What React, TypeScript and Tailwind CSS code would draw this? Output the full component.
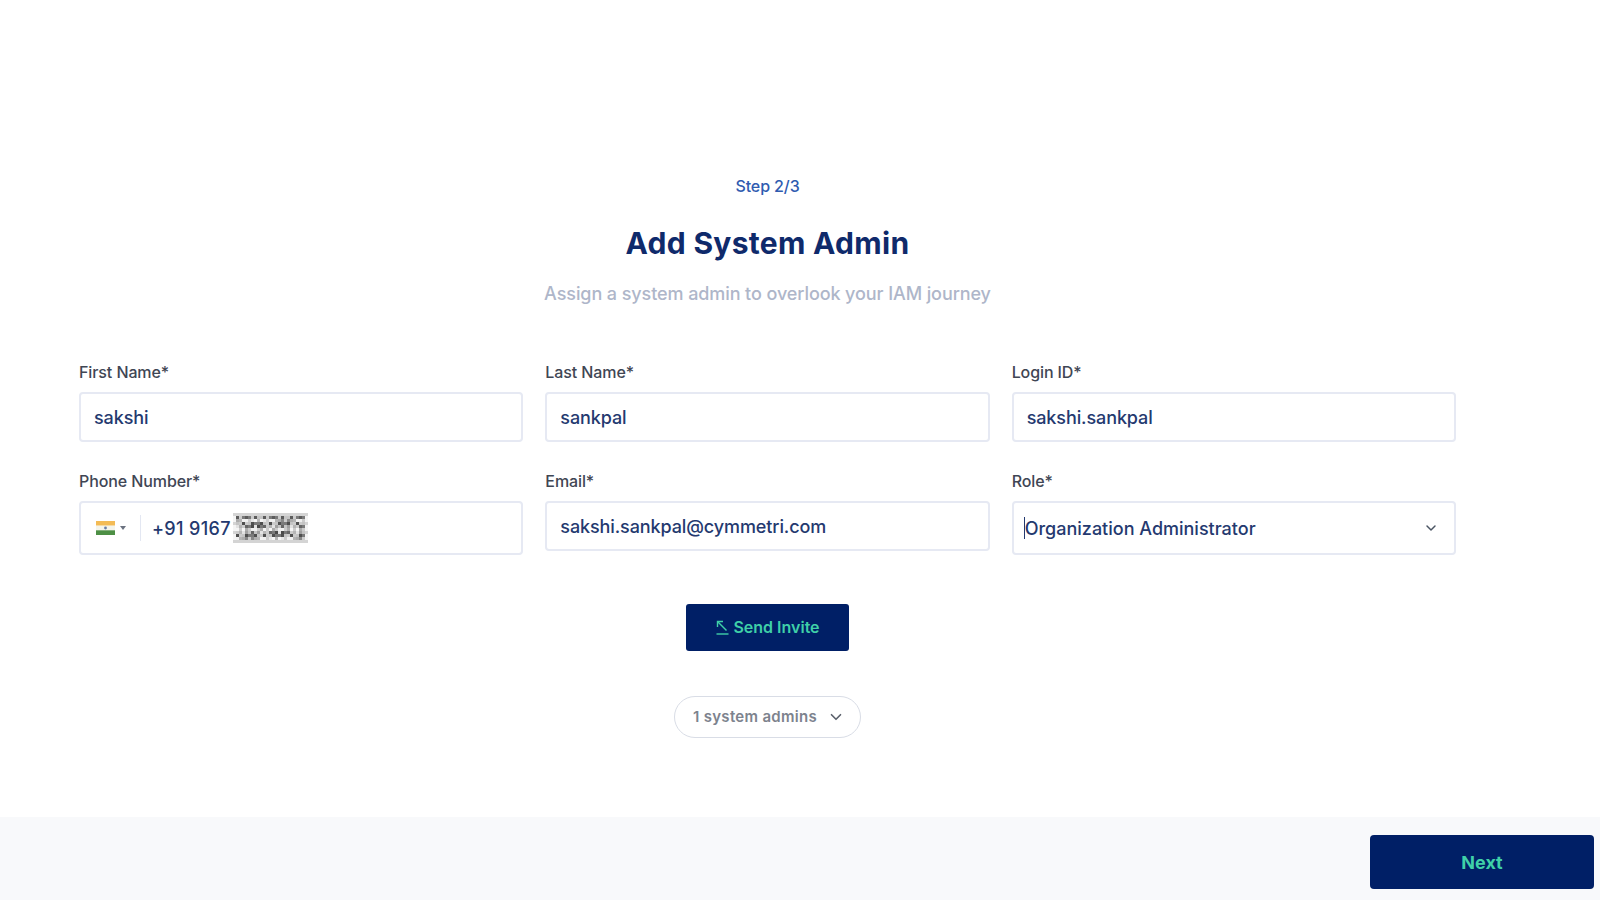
import { ChevronDown } from 'lucide-react';

const inter = 'font-["Inter","Noto_Sans",sans-serif]';

// mosaic cells for the masked part of the phone number
const shades = [
  '#d0d0d0', '#7a7a7a', '#efefef', '#4f4f4f', '#b5b5b5', '#f5f5f5', '#666666', '#c4c4c4', '#e6e6e6', '#5c5c5c',
  '#a0a0a0', '#f0f0f0', '#3f3f3f', '#cccccc', '#888888', '#e2e2e2', '#4a4a4a', '#acacac',
];

function Mosaic() {
  const cells = [];
  for (let y = 0; y < 10; y++) {
    for (let x = 0; x < 25; x++) {
      const edge = y === 0 || y === 9 || x === 0 || x === 24;
      const fill = edge ? (x * 3 + y * 5) % 3 === 0 ? '#d4d4d4' : '#f4f4f4' : shades[(x * x + y * 7 + x * y) % shades.length];
      cells.push(<rect key={`${x}-${y}`} x={x * 3} y={y * 3} width="3" height="3" fill={fill} />);
    }
  }
  return (
    <svg width="75" height="30" viewBox="0 0 75 30" className="ml-[2px] blur-[0.5px]">
      {cells}
    </svg>
  );
}

function Flag() {
  return (
    <svg width="19" height="14" viewBox="0 0 19 14">
      <rect width="19" height="4.7" fill="#f3bb55" />
      <rect y="4.7" width="19" height="4.6" fill="#f4f4ea" />
      <rect y="9.3" width="19" height="4.7" fill="#4d8f45" />
      <circle cx="9.5" cy="7" r="1.4" fill="#6a7fa8" />
    </svg>
  );
}

function SendIcon() {
  return (
    <svg width="14" height="16" viewBox="0 0 14 16" fill="none" stroke="#3fd0a8" strokeWidth="1.4">
      <path d="M1.5 15h12" />
      <path d="M2.5 2.5l9 9" />
      <path d="M2.5 8V2.5h5.5" />
    </svg>
  );
}

function Field({ label, children }: { label: string; children: React.ReactNode }) {
  return (
    <div className="flex flex-col">
      <label className="mb-[9px] h-[21px] text-[16px] font-medium leading-[21px] tracking-[-0.1px] text-[#3f4654]">{label}</label>
      {children}
    </div>
  );
}

function TextBox({ value }: { value: string }) {
  return (
    <div className="flex h-[50px] items-center rounded-[4px] border-2 border-[#e6e9f3] bg-white pl-[13px] text-[18px] font-medium tracking-[-0.1px] text-[#24396f]">
      {value}
    </div>
  );
}

export default function App() {
  return (
    <div className={`flex h-[900px] w-[1600px] flex-col bg-white ${inter}`}>
      <main className="h-[817px] pl-[79px] pt-[174px]">
        <div className="flex w-[1377px] flex-col">
          <div className="flex flex-col items-center">
            <div className="h-[24px] text-[16px] font-medium leading-[24px] tracking-[-0.1px] text-[#2f5bb0]">Step 2/3</div>
            <h1 className="mt-[18px] h-[54px] text-[30px] font-bold leading-[54px] tracking-[0.3px] text-[#0f2a6b]">
              Add System Admin
            </h1>
            <p className="mt-[10px] h-[28px] text-[18px] font-medium leading-[28px] tracking-[-0.09px] text-[#aeb6c9]">
              Assign a system admin to overlook your IAM journey
            </p>
          </div>

          <div className="mt-[54px] grid grid-cols-3 items-start gap-x-[22px] gap-y-[29px]">
            <Field label="First Name*">
              <TextBox value="sakshi" />
            </Field>
            <Field label="Last Name*">
              <TextBox value="sankpal" />
            </Field>
            <Field label="Login ID*">
              <TextBox value="sakshi.sankpal" />
            </Field>

            <Field label="Phone Number*">
              <div className="flex h-[54px] items-center rounded-[4px] border-2 border-[#e6e9f3] bg-white text-[18px] font-medium tracking-[0.35px] text-[#24396f]">
                <div className="ml-[15px] flex items-center gap-[5px]">
                  <Flag />
                  <span className="h-0 w-0 border-x-[3px] border-t-[4px] border-x-transparent border-t-[#6b7280]" />
                </div>
                <div className="ml-[14px] h-[26px] w-px bg-[#e3e7f2]" />
                <span className="ml-[11px]">+91 9167</span>
                <Mosaic />
              </div>
            </Field>
            <Field label="Email*">
              <TextBox value="sakshi.sankpal@cymmetri.com" />
            </Field>
            <Field label="Role*">
              <div className="flex h-[54px] items-center justify-between rounded-[4px] border-2 border-[#e6e9f3] bg-white pl-[10px] pr-[15px] text-[18px] font-medium text-[#24396f]">
                <div className="flex items-center">
                  <span className="h-[22px] w-px bg-[#24396f]" />
                  <span>Organization Administrator</span>
                </div>
                <ChevronDown size={16} strokeWidth={2.2} className="text-[#4b5563]" />
              </div>
            </Field>
          </div>

          <div className="mt-[49px] flex flex-col items-center">
            <button className="flex h-[47px] w-[163px] items-center justify-center gap-[4px] rounded-[3px] bg-[#001f66] pb-[2px] text-[16px] font-semibold text-[#3fd0a8]">
              <SendIcon />
              Send Invite
            </button>
            <button className="mt-[45px] flex h-[42px] w-[187px] items-center justify-center gap-[10px] rounded-full border border-[#d9dde6] bg-white pl-[3px] text-[15px] font-semibold tracking-[0.3px] text-[#7d838e]">
              1 system admins
              <ChevronDown size={18} strokeWidth={2.2} className="text-[#5b616c]" />
            </button>
          </div>
        </div>
      </main>

      <footer className="flex h-[83px] items-start justify-end bg-[#f8f9fb] pr-[6px] pt-[18px]">
        <button className="h-[54px] w-[224px] rounded-[4px] bg-[#001f66] text-[18px] font-bold text-[#3fd0a8]">
          Next
        </button>
      </footer>
    </div>
  );
}
